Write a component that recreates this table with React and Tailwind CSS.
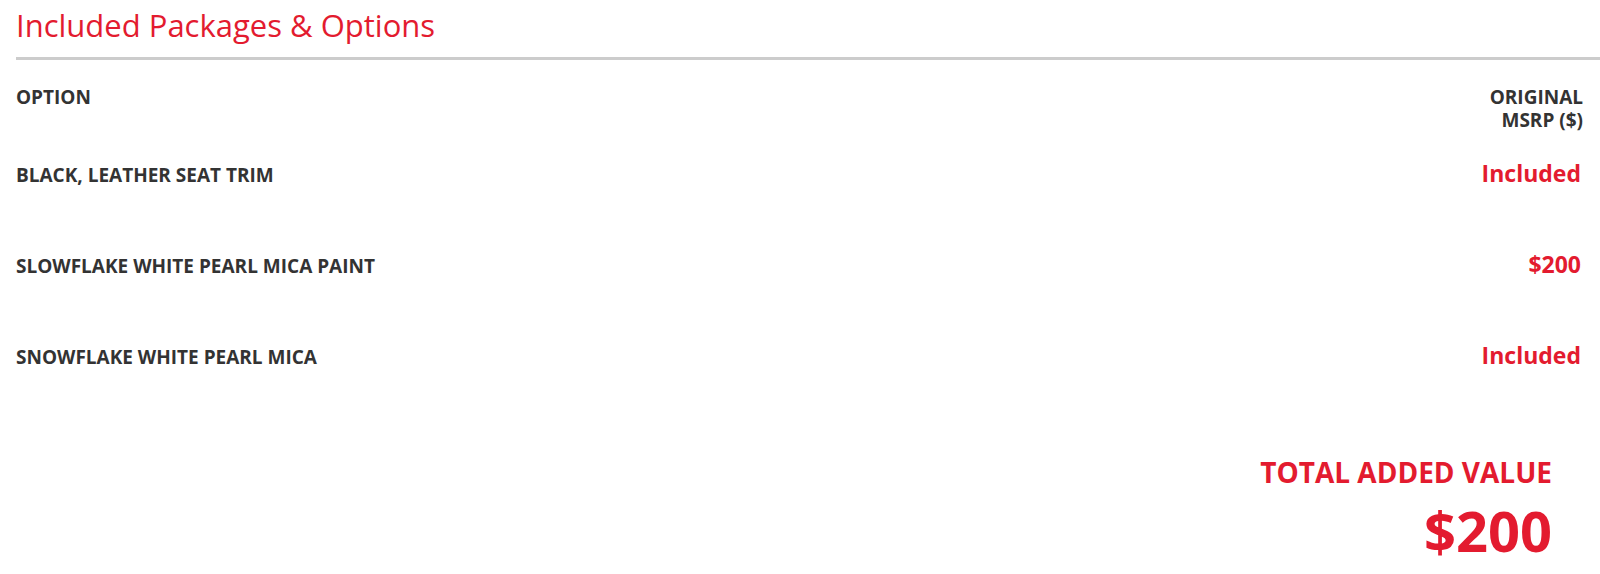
import React from 'react';

const options = [
    { name: 'BLACK, LEATHER SEAT TRIM', price: 'Included' },
    { name: 'SLOWFLAKE WHITE PEARL MICA PAINT', price: '$200' },
    { name: 'SNOWFLAKE WHITE PEARL MICA', price: 'Included' },
];

const App = () => {
    return (
        <div className="min-h-screen bg-white font-['Open_Sans',sans-serif]">
            <div className="pl-4 pt-[5px]">
                <h2 className="text-[31px] leading-[41px] font-normal text-[#e31b2f]">
                    Included Packages &amp; Options
                </h2>
            </div>
            <div className="ml-4 mt-[11px] h-[3px] bg-[#cccccc]" />

            <div className="pl-4 pr-[17px]">
                <div className="flex items-start justify-between pt-[26px]">
                    <div className="text-[19px] leading-[23px] font-bold text-[#333333]">OPTION</div>
                    <div className="text-right text-[19px] leading-[23px] font-bold text-[#333333]">
                        ORIGINAL
                        <br />
                        MSRP ($)
                    </div>
                </div>

                <div className="mt-[26px]">
                    {options.map((opt, i) => (
                        <div key={i} className="flex h-[91px] items-baseline justify-between">
                            <div className="text-[19px] leading-[30px] font-bold text-[#333333]">{opt.name}</div>
                            <div className="pr-[2px] text-[23px] leading-[30px] font-bold text-[#e31b2f]">{opt.price}</div>
                        </div>
                    ))}
                </div>

                <div className="flex flex-col items-end pr-[31px] pt-[22px] text-[#e31b2f]">
                    <div className="text-[28px] leading-[38px] font-bold">TOTAL ADDED VALUE</div>
                    <div className="mt-[9px] text-[56px] leading-[60px] font-bold">$200</div>
                </div>
            </div>
        </div>
    );
};

export default App;
